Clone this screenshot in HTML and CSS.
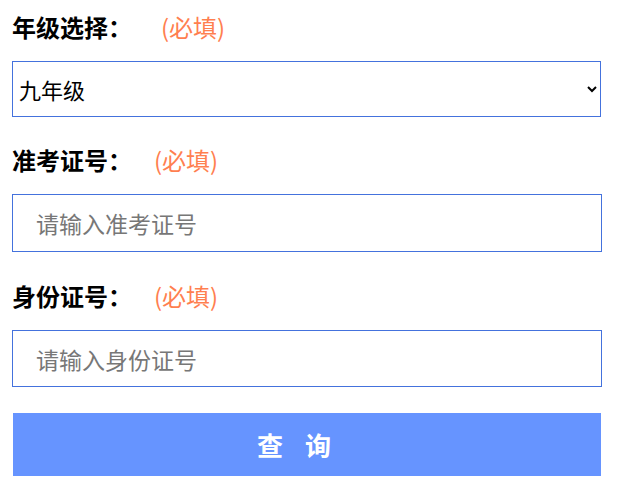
FILE: index.html
```html
<!DOCTYPE html>
<html lang="zh-CN">
<head>
<meta charset="utf-8">
<title>查询</title>
<link rel="stylesheet" href="styles.css">
</head>
<body>
<form class="form">
  <div class="label label-first"><span class="name">年级选择：</span><span class="req req-wide">(必填)</span></div>
  <select class="field select">
    <option>九年级</option>
    <option>八年级</option>
    <option>七年级</option>
  </select>
  <div class="label label-second"><span class="name">准考证号：</span><span class="req">(必填)</span></div>
  <input class="field input" type="text" placeholder="请输入准考证号">
  <div class="label label-third"><span class="name">身份证号：</span><span class="req">(必填)</span></div>
  <input class="field input input-last" type="text" placeholder="请输入身份证号">
  <button class="btn" type="button">查<span class="gap"></span>询</button>
</form>
</body>
</html>
```

FILE: styles.css
```css
* { box-sizing: border-box; }
html, body { margin: 0; padding: 0; background: #fff; }
body {
  font-family: "Noto Sans CJK SC", "Noto Sans", "Liberation Sans", sans-serif;
  color: #000;
}
.form {
  display: flex;
  flex-direction: column;
  width: 602px;
  padding: 11px 0 0 12px;
}
.label {
  display: flex;
  align-items: center;
  height: 32px;
  font-size: 24px;
  line-height: 32px;
}
.name { font-weight: bold; }
.req { color: #ff7f50; margin-left: 22px; }
.req-wide { margin-left: 29px; }
.label-second { margin-top: 27px; }
.label-third { margin-top: 28px; }
.field {
  width: 589px;
  border: 1px solid #4472dd;
  background: #fff;
  font-family: inherit;
  font-size: 22px;
  color: #000;
  outline: none;
  margin: 0;
}
.select {
  margin-top: 18px;
  height: 56px;
  padding: 0 8px 0 2px;
  border-radius: 0;
}
.input {
  margin-top: 18px;
  width: 590px;
  height: 58px;
  padding: 0 23px;
  font-size: 23px;
}
.input-last { margin-top: 18px; height: 57px; }
.input::placeholder { color: #777; }
.btn {
  margin-top: 26px;
  margin-left: 1px;
  width: 588px;
  height: 63px;
  border: none;
  background: #6694ff;
  color: #fff;
  font-family: inherit;
  font-size: 26px;
  font-weight: bold;
  display: flex;
  align-items: center;
  justify-content: center;
  padding: 0 26px 0 0;
}
.gap { display: inline-block; width: 22px; }
```
